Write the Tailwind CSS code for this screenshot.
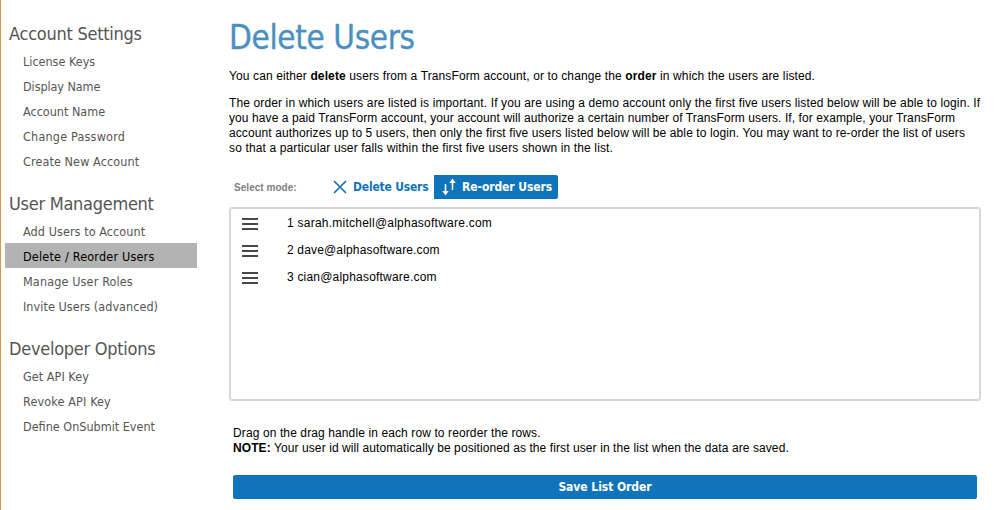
<!DOCTYPE html>
<html lang="en">
<head>
<meta charset="utf-8">
<title>Delete Users</title>
<script src="https://cdn.jsdelivr.net/npm/@tailwindcss/browser@4"></script>
</head>
<body class="bg-white text-black overflow-hidden">
<div class="flex h-[510px] w-[1000px] font-['Liberation_Sans',Arial,sans-serif] text-[12px] leading-[15px]">
  <nav class="w-[229px] shrink-0 border-l border-[#d99b4e] pl-1 font-['DejaVu_Sans_Condensed','DejaVu_Sans',sans-serif] text-[#555] whitespace-nowrap">
    <h2 class="h-[49px] pt-[21px] pl-1 text-[18px] leading-[25px] tracking-[-0.26px]">Account Settings</h2>
    <ul class="w-48 text-[12.5px] leading-[25px]">
      <li class="pl-[18px]">License Keys</li>
      <li class="pl-[18px] tracking-[-0.08px]">Display Name</li>
      <li class="pl-[18px]">Account Name</li>
      <li class="pl-[18px] tracking-[0.2px]">Change Password</li>
      <li class="pl-[18px] tracking-[0.1px]">Create New Account</li>
    </ul>
    <h2 class="h-[45px] pt-[17px] pl-1 text-[18px] leading-[25px] tracking-[-0.27px]">User Management</h2>
    <ul class="w-48 text-[12.5px] leading-[25px]">
      <li class="pl-[18px] tracking-[0.08px]">Add Users to Account</li>
      <li class="-mt-px h-[25px] pl-[18px] bg-[#b3b3b3] text-black leading-[27px] tracking-[0.2px]">Delete / Reorder Users</li>
      <li class="mt-px pl-[18px] tracking-[0.14px]">Manage User Roles</li>
      <li class="pl-[18px] tracking-[0.05px]">Invite Users (advanced)</li>
    </ul>
    <h2 class="h-[45px] pt-[17px] pl-1 text-[18px] leading-[25px] tracking-[-0.27px]">Developer Options</h2>
    <ul class="w-48 text-[12.5px] leading-[25px]">
      <li class="pl-[18px] tracking-[0.05px]">Get API Key</li>
      <li class="pl-[18px] tracking-[0.14px]">Revoke API Key</li>
      <li class="pl-[18px]">Define OnSubmit Event</li>
    </ul>
  </nav>
  <main class="flex w-[752px] flex-col whitespace-nowrap">
    <h1 class="mt-[18px] h-[51px] text-[33px] leading-[40px] tracking-[-0.38px] text-[#4a8fc0] font-['DejaVu_Sans_Condensed','DejaVu_Sans',sans-serif] [-webkit-text-stroke:0.3px_#4a8fc0]">Delete Users</h1>
    <p class="h-[27px] tracking-[0.12px]">You can either <b>delete</b> users from a TransForm account, or to change the <b>order</b> in which the users are listed.</p>
    <p class="h-[79px]">
      <span class="tracking-[0.125px]">The order in which users are listed is important. If you are using a demo account only the first five users listed below will be able to login. If</span><br>
      <span class="tracking-[0.09px]">you have a paid TransForm account, your account will authorize a certain number of TransForm users. If, for example, your TransForm</span><br>
      <span class="tracking-[0.1px]">account authorizes up to 5 users, then only the first five users listed below will be able to login. You may want to re-order the list of users</span><br>
      <span class="tracking-[0.135px]">so that a particular user falls within the first five users shown in the list.</span>
    </p>
    <div class="flex h-6 items-center font-['DejaVu_Sans_Condensed','DejaVu_Sans',sans-serif] text-[12px] font-bold">
      <div class="w-[104px] pl-[5px] font-['Liberation_Sans',Arial,sans-serif] text-[10px] tracking-[0.04px] text-[#808080]">Select mode:</div>
      <button class="flex h-6 w-[101px] items-center gap-[6px] text-[#1074bb]">
        <svg class="size-[14px] shrink-0" viewBox="0 0 14 14" fill="none" stroke="currentColor" stroke-width="1.7"><path d="M1 1l12 12M13 1L1 13"/></svg>
        <span class="pt-px tracking-[-0.2px]">Delete Users</span>
      </button>
      <button class="flex h-6 w-[124px] items-center gap-[6px] rounded-r-[2px] bg-[#1074bb] pl-2 text-white">
        <svg class="h-[18px] w-[14px] shrink-0" viewBox="0 0 14 18" fill="none" stroke="currentColor" stroke-width="1.5"><path d="M3.500 6v9M10.500 12V3"/><path d="M.3 13h6.400L3.500 17.600zM7.300 5h6.400L10.500 .4z" fill="currentColor" stroke="none"/></svg>
        <span class="pt-px tracking-[-0.08px]">Re-order Users</span>
      </button>
    </div>
    <div class="mt-2 h-[194px] rounded-[3px] border-2 border-[#d8d8d8] pt-px">
      <div class="flex h-[27px] items-center pl-[11px]"><svg class="h-3 w-4" viewBox="0 0 16 12"><path d="M0 0h16v2H0zM0 5h16v2H0zM0 10h16v2H0z" fill="#484848"/></svg><span class="ml-[29px] tracking-[0.24px]">1 sarah.mitchell@alphasoftware.com</span></div>
      <div class="flex h-[27px] items-center pl-[11px]"><svg class="h-3 w-4" viewBox="0 0 16 12"><path d="M0 0h16v2H0zM0 5h16v2H0zM0 10h16v2H0z" fill="#484848"/></svg><span class="ml-[29px] tracking-[0.16px]">2 dave@alphasoftware.com</span></div>
      <div class="flex h-[27px] items-center pl-[11px]"><svg class="h-3 w-4" viewBox="0 0 16 12"><path d="M0 0h16v2H0zM0 5h16v2H0zM0 10h16v2H0z" fill="#484848"/></svg><span class="ml-[29px] tracking-[0.2px]">3 cian@alphasoftware.com</span></div>
    </div>
    <div class="mt-[25px] h-[49px] pl-1">
      <p class="tracking-[0.11px]">Drag on the drag handle in each row to reorder the rows.</p>
      <p class="tracking-[0.09px]"><b>NOTE:</b> Your user id will automatically be positioned as the first user in the list when the data are saved.</p>
    </div>
    <button class="mx-1 h-6 rounded-[2px] bg-[#1074bb] pt-px font-['DejaVu_Sans_Condensed','DejaVu_Sans',sans-serif] text-[12px] font-bold tracking-[-0.05px] text-white">Save List Order</button>
  </main>
</div>
</body>
</html>
